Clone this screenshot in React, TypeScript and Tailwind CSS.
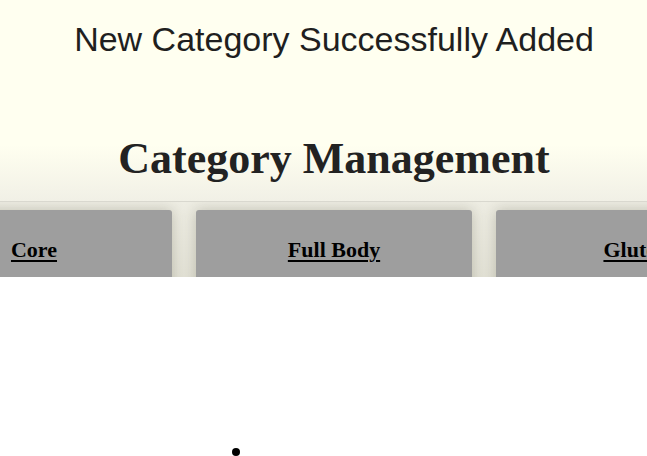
const categories = ['Core', 'Full Body', 'Glutes']

export default function App() {
  return (
    <div className="w-full h-screen overflow-hidden bg-white">
      <div className="w-[668px]">
        {/* header */}
        <header className="h-[202px] border-b border-[#d9d8cf] bg-[linear-gradient(to_bottom,#fffff0_0%,#fffff0_72%,#f1f0e6_100%)] text-center">
          <p className="pt-5 text-[34px] leading-[38px] text-[#1f1f1f] font-['Liberation_Sans',Arial,sans-serif]">
            New Category Successfully Added
          </p>
          <h1 className="mt-[76px] text-[44px] leading-[50px] font-bold text-[#222] font-['Liberation_Serif','Times_New_Roman',serif]">
            Category Management
          </h1>
        </header>

        {/* categories row */}
        <div className="h-[75px] overflow-hidden bg-[linear-gradient(to_bottom,#eeede3,#e3e2d6)] pt-2 flex justify-center gap-6">
          {categories.map((c) => (
            <div
              key={c}
              className="w-[276px] shrink-0 h-[90px] rounded-t-[3px] bg-[#9e9e9e] shadow-[0_0_14px_rgba(60,60,40,0.25)] text-center pt-[26px]"
            >
              <a
                href="#"
                className="text-[22px] leading-[28px] font-bold text-black underline underline-offset-[3px] decoration-2 font-['Liberation_Serif','Times_New_Roman',serif]"
              >
                {c}
              </a>
            </div>
          ))}
        </div>

        {/* list */}
        <ul className="list-disc pl-[255px] mt-[158px] text-[28px] leading-[32px] font-['Liberation_Serif',serif]">
          <li>&nbsp;</li>
        </ul>
      </div>
    </div>
  )
}
